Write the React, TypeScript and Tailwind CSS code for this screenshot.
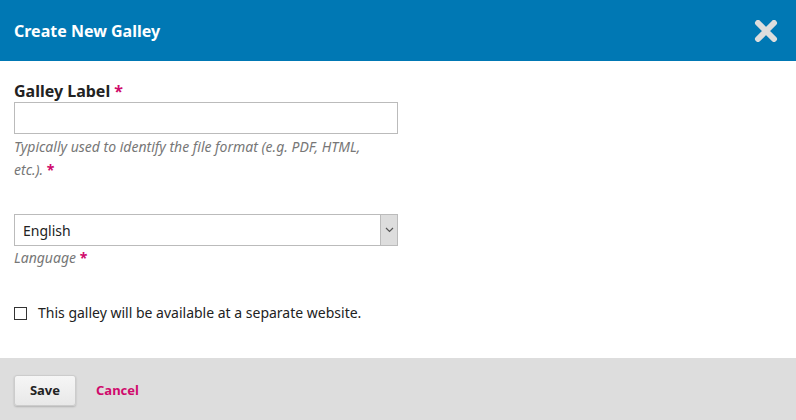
import React from "react";

export default function App() {
  return (
    <div
      className="w-[796px] h-[420px] bg-white flex flex-col overflow-hidden"
      style={{ fontFamily: '"Noto Sans", "Open Sans", sans-serif' }}
    >
      {/* Header */}
      <div className="h-[61px] bg-[#0078b4] flex items-center justify-between pl-[14px] pr-[18px] shrink-0">
        <h1 className="text-white font-bold text-[16px] leading-none">Create New Galley</h1>
        <svg width="24" height="22" viewBox="0 0 24 22" aria-label="Close">
          <path
            d="M4 3 L12 11 M20 3 L12 11 M4 19 L12 11 M20 19 L12 11"
            stroke="#dddddd"
            strokeWidth="6"
            strokeLinecap="round"
          />
        </svg>
      </div>

      {/* Body */}
      <div className="flex-1 pl-[14px] pt-[19px]">
        <label className="block text-[16px] font-bold text-[#222] leading-[22px]">
          Galley Label <span className="text-[#d00a6c]">*</span>
        </label>
        <input
          type="text"
          className="block w-[384px] h-[32px] border border-[#bbb] bg-white"
        />
        <p className="mt-[1px] w-[360px] text-[14px] italic text-[#777] leading-[23px]">
          Typically used to identify the file format (e.g. PDF, HTML, etc.).{" "}
          <span className="text-[#d00a6c] not-italic font-bold">*</span>
        </p>

        <div className="mt-[33px] w-[384px] h-[32px] border border-[#bbb] flex">
          <div className="flex-1 flex items-center pl-[8px] text-[14px] text-[#222]">English</div>
          <div className="w-[17px] bg-[#dddddd] border-l border-[#bbb] flex items-center justify-center">
            <svg width="9" height="6" viewBox="0 0 9 6">
              <path d="M1 1 L4.5 4.5 L8 1" stroke="#555" strokeWidth="1.2" fill="none" />
            </svg>
          </div>
        </div>
        <p className="text-[14px] italic text-[#777] leading-[23px]">
          Language <span className="text-[#d00a6c] not-italic font-bold">*</span>
        </p>

        <label className="mt-[34px] flex items-center gap-[11px] text-[14px] leading-[20px] text-[#222]">
          <span className="w-[13px] h-[13px] border border-[#333] bg-white inline-block" />
          This galley will be available at a separate website.
        </label>
      </div>

      {/* Footer */}
      <div className="h-[62px] bg-[#dddddd] flex items-start pt-[17px] pl-[14px] gap-[20px] shrink-0">
        <button className="w-[62px] h-[31px] rounded-[3px] border border-[#ccc] bg-gradient-to-b from-[#f6f6f6] to-[#e8e8e8] shadow-[0_1px_2px_rgba(0,0,0,0.2)] text-[13px] font-bold text-[#222]">
          Save
        </button>
        <a className="leading-[31px] text-[13px] font-bold text-[#d00a6c]">Cancel</a>
      </div>
    </div>
  );
}
